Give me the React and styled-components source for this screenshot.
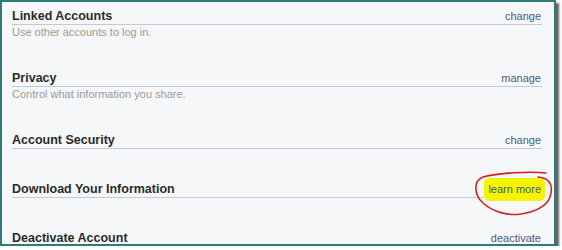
import React from "react";
import styled, { createGlobalStyle } from "styled-components";

const GlobalStyle = createGlobalStyle`
  body {
    margin: 0;
    background: #ffffff;
    font-family: "Liberation Sans", Arial, sans-serif;
  }
`;

export const Frame = styled.div`
  position: relative;
  box-sizing: border-box;
  width: 556px;
  height: 246px;
  border: 2px solid #2f7b78;
  background: #f6f7f8;
  box-shadow: 3px 3px 2px #5e6262;
  padding: 0 12px 0 10px;
  overflow: hidden;
`;

export const Section = styled.div`
  padding-top: 6px;
  margin-bottom: 26px;
`;

export const Header = styled.div`
  display: flex;
  align-items: flex-end;
  justify-content: space-between;
  height: 16px;
  border-bottom: 1px solid #c3c9d5;
`;

export const Title = styled.span`
  font-size: 12.5px;
  font-weight: 700;
  line-height: 16px;
  color: #2b2b2b;
`;

export const Action = styled.a`
  font-size: 11px;
  line-height: 15px;
  color: #4a5a80;
  text-decoration: none;
  margin-right: 1px;
  background: ${(p) => (p.$marked ? "#f4f400" : "transparent")};
  box-shadow: ${(p) => (p.$marked ? "0 0 0 4px #f4f400" : "none")};
  border-radius: 2px;
`;

export const Sub = styled.div`
  box-sizing: border-box;
  height: 13px;
  padding-top: 1px;
  font-size: 11px;
  line-height: 13px;
  color: #9a9a9a;
`;

const Scribble = styled.svg`
  position: absolute;
  left: 0;
  top: 0;
  width: 556px;
  height: 246px;
  pointer-events: none;
`;

const rows = [
  { title: "Linked Accounts", action: "change", sub: "Use other accounts to log in." },
  { title: "Privacy", action: "manage", sub: "Control what information you share." },
  { title: "Account Security", action: "change" },
  { title: "Download Your Information", action: "learn more", marked: true },
  { title: "Deactivate Account", action: "deactivate" },
];

export default function App() {
  return (
    <>
      <GlobalStyle />
      <Frame>
        {rows.map((r) => (
          <Section key={r.title}>
            <Header>
              <Title>{r.title}</Title>
              <Action href="#" $marked={r.marked}>
                {r.action}
              </Action>
            </Header>
            {r.sub && <Sub>{r.sub}</Sub>}
          </Section>
        ))}
        <Scribble viewBox="0 0 556 246">
          <path
            d="M544 171 C528 169 496 171 481 175 C471 179 472 193 481 201 C491 210 506 214 519 212 C533 210 545 204 548 195 C551 186 550 176 536 175"
            fill="none"
            stroke="#d42020"
            strokeWidth="1.6"
            strokeLinecap="round"
          />
        </Scribble>
      </Frame>
    </>
  );
}
